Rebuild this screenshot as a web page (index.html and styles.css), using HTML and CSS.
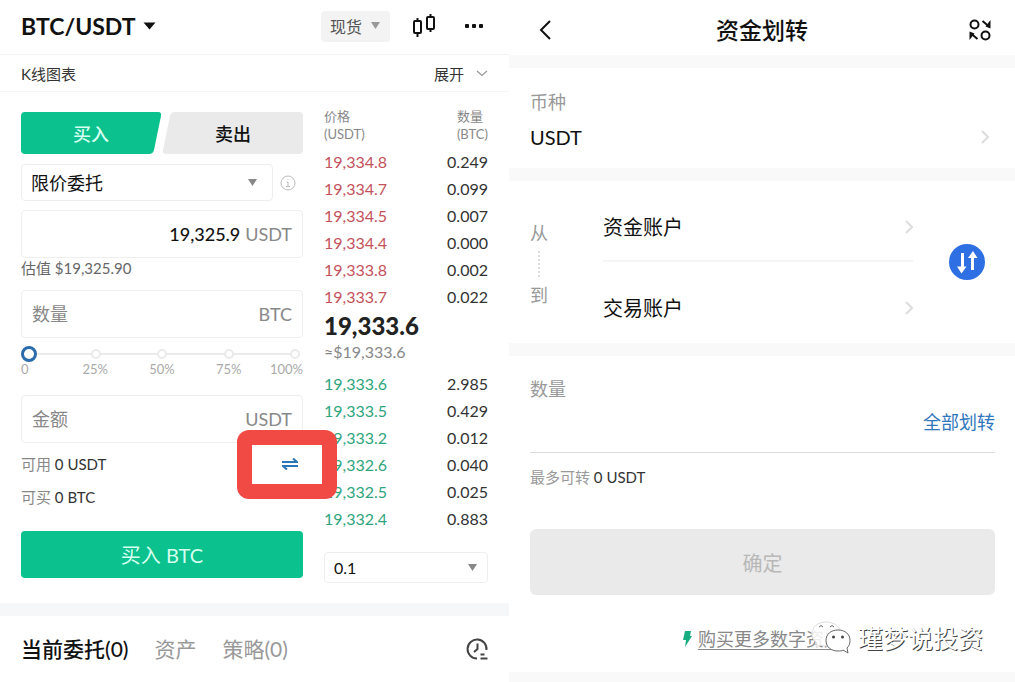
FILE: index.html
```html
<!DOCTYPE html>
<html lang="zh-CN">
<head>
  <meta charset="UTF-8">
  <meta name="viewport" content="width=device-width, initial-scale=1">
  <title>BTC/USDT</title>
  <link rel="stylesheet" href="styles.css">
</head>
<body>
  <div class="screens">

    <!-- Spot trading -->
    <main class="trade">
      <header class="trade-header">
        <button class="pair">BTC/USDT <svg width="13" height="8" viewBox="0 0 12 8"><path d="M0 0.500h12L6 7.500z" fill="#111"/></svg></button>
        <div class="header-tools">
          <div class="select-wrap market">
            <select aria-label="市场"><option>现货</option></select>
            <svg class="arrow" width="9" height="7" viewBox="0 0 9 7"><path d="M0 0h9L4.500 7z" fill="#999"/></svg>
          </div>
          <button class="icon-btn" aria-label="K线">
            <svg width="24" height="26" viewBox="0 0 24 26" fill="none" stroke="#111" stroke-width="2">
              <rect x="2" y="8" width="7" height="12" rx="1"/><path d="M5.500 5v3M5.500 20v4"/>
              <rect x="15" y="4" width="7" height="12" rx="1"/><path d="M18.500 1v3M18.500 16v3"/>
            </svg>
          </button>
          <button class="icon-btn" aria-label="更多">
            <svg width="20" height="4" viewBox="0 0 20 4" fill="#111"><rect x="1" width="4" height="4" rx="1"/><rect x="8" width="4" height="4" rx="1"/><rect x="15" width="4" height="4" rx="1"/></svg>
          </button>
        </div>
      </header>

      <div class="chart-row">
        <span>K线图表</span>
        <button class="expand">展开 <svg width="12" height="7" viewBox="0 0 12 7"><path d="M1 1l5 4.500L11 1" fill="none" stroke="#999" stroke-width="1.300"/></svg></button>
      </div>

      <div class="trade-body">
        <form class="order">
          <div class="sides">
            <button type="button" class="side buy">
              <svg class="side-bg" viewBox="0 0 140 42" preserveAspectRatio="none"><path d="M4 0H137q4 0 3 4L133 38q-1 4-5 4H4q-4 0-4-4V4q0-4 4-4z" fill="#0bc18d"/></svg>
              <span>买入</span>
            </button>
            <button type="button" class="side sell">
              <svg class="side-bg" viewBox="0 0 140 42" preserveAspectRatio="none"><path d="M11 0H136q4 0 4 4V38q0 4-4 4H3q-4 0-3-4L7 4q1-4 4-4z" fill="#eaeaea"/></svg>
              <span>卖出</span>
            </button>
          </div>

          <div class="type-row">
            <div class="select-wrap order-type">
              <select aria-label="委托类型"><option>限价委托</option></select>
              <svg class="arrow" width="9" height="7" viewBox="0 0 9 7"><path d="M0 0h9L4.500 7z" fill="#888"/></svg>
            </div>
            <button type="button" class="icon-btn" aria-label="说明">
              <svg width="16" height="16" viewBox="0 0 16 16" fill="none" stroke="#bbb"><circle cx="8" cy="8" r="7"/><path d="M6.500 7H8v4.500M6 11.500h4"/><path d="M7.500 4h1v1h-1z" fill="#bbb" stroke="none"/></svg>
            </button>
          </div>

          <label class="field">
            <input class="price" type="text" value="19,325.9" aria-label="价格">
            <span>USDT</span>
          </label>
          <p class="estimate">估值 $19,325.90</p>

          <label class="field">
            <input type="text" placeholder="数量" aria-label="数量">
            <span>BTC</span>
          </label>

          <div class="slider">
            <div class="ticks"><i></i><i></i><i></i><i></i><i></i></div>
            <input type="range" min="0" max="100" value="0" aria-label="比例">
          </div>
          <div class="percents">
            <span>0</span><span>25%</span><span>50%</span><span>75%</span><span>100%</span>
          </div>

          <label class="field">
            <input type="text" placeholder="金额" aria-label="金额">
            <span>USDT</span>
          </label>

          <div class="balance">
            <span>可用 <b>0 USDT</b></span>
            <button type="button" class="icon-btn swap" aria-label="划转">
              <svg width="16" height="12" viewBox="0 0 16 12" fill="none" stroke="#2a76b8" stroke-width="2"><path d="M0 4h15L11 0.500M16 8H1l4 3.500"/></svg>
            </button>
            <div class="highlight"></div>
          </div>
          <div class="balance"><span>可买 <b>0 BTC</b></span></div>

          <button type="button" class="submit">买入 BTC</button>
        </form>

        <section class="book">
          <table>
            <thead>
              <tr><th>价格<br>(USDT)</th><th><span>数量<br>(BTC)</span></th></tr>
            </thead>
            <tbody class="asks">
              <tr><td>19,334.8</td><td>0.249</td></tr>
              <tr><td>19,334.7</td><td>0.099</td></tr>
              <tr><td>19,334.5</td><td>0.007</td></tr>
              <tr><td>19,334.4</td><td>0.000</td></tr>
              <tr><td>19,333.8</td><td>0.002</td></tr>
              <tr><td>19,333.7</td><td>0.022</td></tr>
            </tbody>
            <tbody>
              <tr><td class="last" colspan="2"><strong>19,333.6</strong><small>≈$19,333.6</small></td></tr>
            </tbody>
            <tbody class="bids">
              <tr><td>19,333.6</td><td>2.985</td></tr>
              <tr><td>19,333.5</td><td>0.429</td></tr>
              <tr><td>19,333.2</td><td>0.012</td></tr>
              <tr><td>19,332.6</td><td>0.040</td></tr>
              <tr><td>19,332.5</td><td>0.025</td></tr>
              <tr><td>19,332.4</td><td>0.883</td></tr>
            </tbody>
          </table>
          <div class="select-wrap depth">
            <select aria-label="深度"><option>0.1</option></select>
            <svg class="arrow" width="9" height="7" viewBox="0 0 9 7"><path d="M0 0h9L4.500 7z" fill="#888"/></svg>
          </div>
        </section>
      </div>

      <nav class="orders">
        <button class="active">当前委托(0)</button>
        <button>资产</button>
        <button>策略(0)</button>
        <button class="history" aria-label="历史">
          <svg width="22" height="22" viewBox="0 0 22 22" fill="none" stroke="#444" stroke-width="2"><path d="M11 20.500A9.500 9.500 0 1 1 20.500 12"/><path d="M11.500 5.500v5.500l-3.500 3M14.500 16.500h4M14.500 20.500h7"/></svg>
        </button>
      </nav>
    </main>

    <!-- Fund transfer -->
    <main class="transfer">
      <header class="transfer-header">
        <button class="icon-btn back" aria-label="返回">
          <svg width="12" height="20" viewBox="0 0 12 20" fill="none" stroke="#111" stroke-width="2"><path d="M11 1L2 10l9 9"/></svg>
        </button>
        <h1>资金划转</h1>
        <button class="icon-btn" aria-label="划转记录">
          <svg width="22" height="22" viewBox="0 0 22 22" fill="none" stroke="#111" stroke-width="2"><circle cx="5.500" cy="5.500" r="4"/><circle cx="16.500" cy="16.500" r="4"/><path d="M13.500 2l6.500 5.500M8.500 20L2 14.500"/><path d="M21.500 1v8.500l-5-2zM0.500 21v-8.500l5 2z" fill="#111" stroke="none"/></svg>
        </button>
      </header>

      <section class="coin">
        <span class="caption">币种</span>
        <button class="row-btn">USDT
          <svg width="8" height="14" viewBox="0 0 8 14" fill="none" stroke="#ddd" stroke-width="2"><path d="M1 1l6 6-6 6"/></svg>
        </button>
      </section>

      <section class="accounts">
        <div class="direction"><span>从</span><i></i><span>到</span></div>
        <div class="account-list">
          <button class="row-btn">资金账户
            <svg width="8" height="14" viewBox="0 0 8 14" fill="none" stroke="#ddd" stroke-width="2"><path d="M1 1l6 6-6 6"/></svg>
          </button>
          <button class="row-btn">交易账户
            <svg width="8" height="14" viewBox="0 0 8 14" fill="none" stroke="#ddd" stroke-width="2"><path d="M1 1l6 6-6 6"/></svg>
          </button>
        </div>
        <button class="icon-btn" aria-label="互换">
          <svg width="36" height="36" viewBox="0 0 36 36"><circle cx="18" cy="18" r="18" fill="#2f6fe4"/><path d="M13.500 9v15M23.500 26V12" stroke="#fff" stroke-width="3" fill="none"/><path d="M8 22.500h9.500L12.500 29.500zM19 14h9.500L24 7z" fill="#fff"/></svg>
        </button>
      </section>

      <section class="amount">
        <label class="caption" for="amount">数量</label>
        <div class="amount-row">
          <input id="amount" type="text">
          <a href="#">全部划转</a>
        </div>
        <p class="max">最多可转 <b>0 USDT</b></p>
        <button class="confirm" disabled>确定</button>
        <div class="buy-more">
          <svg width="9" height="16" viewBox="0 0 9 16"><path d="M2 0h6L7 5h2L2 16l1-7H0z" fill="#16ad80"/></svg>
          <a href="#">购买更多数字资产</a>
        </div>
        <div class="watermark">
          <svg width="40" height="34" viewBox="0 0 40 34" fill="#fff" stroke="#666">
            <path d="M15 1C7 1 1 6 1 13c0 4 2 7 5 9l-1 5 5-3c2 1 4 1 6 1 8 0 14-5 14-12S23 1 15 1z" fill-opacity="0.850" stroke="#ddd"/>
            <path d="M8 6q2-3 4 0M19 6q2-3 4 0" fill="none"/>
            <path d="M27 9c-7 0-12 4-12 10.500S20 30 27 30c2 0 4 0 5-1l5 3-1-5c2-2 3-4 3-7.500C39 13 34 9 27 9z"/>
            <circle cx="22.500" cy="16" r="1.500" fill="#444" stroke="none"/><circle cx="31.500" cy="16" r="1.500" fill="#444" stroke="none"/>
          </svg>
          <span>瑾梦说投资</span>
        </div>
      </section>
    </main>

  </div>
</body>
</html>
```

FILE: styles.css
```css
* {
  box-sizing: border-box;
}
body {
  margin: 0;
  font-family: Lato, "Noto Sans CJK SC", sans-serif;
  font-size: 16px;
  color: #111;
  background: #fff;
}
button,
input,
select {
  font: inherit;
  color: inherit;
  background: none;
  border: none;
  padding: 0;
  margin: 0;
  outline: none;
}
button {
  cursor: pointer;
}
svg {
  display: block;
  flex: none;
}
p,
h1 {
  margin: 0;
}
b {
  font-weight: 400;
  color: #333;
}
.screens {
  display: grid;
  grid-template-columns: 509fr 506fr;
  min-height: 100vh;
}
.icon-btn {
  display: flex;
}

/* dropdowns */
.select-wrap {
  position: relative;
  border: 1px solid #eee;
  border-radius: 4px;
}
.select-wrap select {
  display: block;
  width: 100%;
  height: 100%;
  padding-left: 9px;
  appearance: none;
}
.select-wrap .arrow {
  position: absolute;
  right: 10px;
  top: 50%;
  margin-top: -4px;
  pointer-events: none;
}

/* trading screen */
.trade-header {
  display: flex;
  align-items: center;
  justify-content: space-between;
  height: 55px;
  padding: 0 25px 2px 21px;
  border-bottom: 1px solid #f2f2f2;
}
.pair {
  display: flex;
  align-items: center;
  gap: 7px;
  font-size: 23px;
  font-weight: 700;
}
.header-tools {
  display: flex;
  align-items: center;
  gap: 22px;
}
.header-tools .icon-btn + .icon-btn {
  margin-left: 6px;
}
.market {
  width: 69px;
  height: 31px;
  background: #f3f3f3;
  border: none;
  color: #555;
}
.chart-row {
  display: flex;
  align-items: center;
  justify-content: space-between;
  height: 37px;
  padding: 0 21px;
  font-size: 15px;
  color: #333;
  border-bottom: 1px solid #f5f5f5;
}
.expand {
  display: flex;
  align-items: center;
  gap: 12px;
}
.trade-body {
  display: grid;
  grid-template-columns: minmax(0, 282fr) minmax(0, 164fr);
  gap: 21px;
  padding: 15px 21px 20px;
}
.order {
  padding-top: 5px;
}
.sides {
  display: grid;
  grid-template-columns: 1fr 1fr;
  gap: 2px;
}
.side {
  position: relative;
  height: 42px;
  font-size: 18px;
  font-weight: 500;
}
.side span {
  position: relative;
}
.side-bg {
  position: absolute;
  left: 0;
  top: 0;
  width: 100%;
  height: 100%;
}
.buy {
  color: #d5fff0;
}
.type-row {
  display: flex;
  align-items: center;
  gap: 7px;
  margin: 10px 7px 9px 0;
}
.order-type {
  flex: 1;
  height: 37px;
  font-size: 18px;
}
.order-type .arrow {
  right: 15px;
}
.field {
  display: flex;
  align-items: center;
  height: 48px;
  padding: 0 10px;
  border: 1px solid #eee;
  border-radius: 4px;
  font-size: 18px;
  color: #888;
}
.field input {
  flex: 1;
  min-width: 0;
}
.field input::placeholder {
  color: #888;
}
.field .price {
  text-align: right;
  font-weight: 500;
  color: #111;
  margin-right: 5px;
}
.estimate {
  font-size: 15px;
  line-height: 20px;
  color: #666;
  margin-bottom: 12px;
}
.slider {
  position: relative;
  height: 16px;
  margin-top: 8px;
}
.ticks {
  display: flex;
  align-items: center;
  justify-content: space-between;
  height: 16px;
  padding: 0 3px;
  background: linear-gradient(#ebebeb, #ebebeb) center / calc(100% - 16px) 2px no-repeat;
}
.ticks i {
  width: 10px;
  height: 10px;
  border: 2px solid #eaeaea;
  border-radius: 50%;
  background: #fff;
}
.slider input {
  position: absolute;
  left: 0;
  top: 0;
  width: 100%;
  height: 16px;
  appearance: none;
}
.slider input::-webkit-slider-thumb {
  appearance: none;
  width: 16px;
  height: 16px;
  border: 3px solid #2a6cac;
  border-radius: 50%;
  background: #fff;
}
.percents {
  display: grid;
  grid-template-columns: 41fr 67fr 67fr 67fr 41fr;
  font-size: 13px;
  line-height: 14px;
  color: #aaa;
  text-align: center;
  margin-bottom: 19px;
}
.percents span:first-child {
  text-align: left;
}
.percents span:last-child {
  justify-self: end;
}
.balance {
  position: relative;
  display: flex;
  align-items: center;
  justify-content: space-between;
  height: 33px;
  font-size: 15px;
  color: #888;
}
.field + .balance {
  margin-top: 4px;
}
.swap {
  margin-right: 5px;
}
.highlight {
  position: absolute;
  right: -34px;
  top: 50%;
  width: 100px;
  height: 69px;
  margin-top: -34px;
  border: 15px solid #f14a45;
  border-radius: 12px;
  pointer-events: none;
}
.submit {
  display: block;
  width: 100%;
  height: 47px;
  margin-top: 18px;
  border-radius: 4px;
  background: #0bc18d;
  color: #d5fff0;
  font-size: 20px;
}
.book table {
  width: 100%;
  border-collapse: collapse;
}
.book th {
  height: 41px;
  padding: 0;
  vertical-align: top;
  text-align: left;
  font-size: 13px;
  font-weight: 400;
  line-height: 18px;
  color: #888;
}
.book th + th {
  text-align: right;
}
.book th span {
  display: inline-block;
  text-align: left;
}
.book td {
  height: 27px;
  padding: 0;
  line-height: 20px;
}
.book td + td {
  text-align: right;
  color: #333;
}
.asks td {
  color: #c4525c;
}
.bids td {
  color: #2fa57e;
}
.book .last {
  padding-bottom: 8px;
}
.last strong {
  display: block;
  font-size: 24px;
  line-height: 32px;
  font-weight: 900;
  color: #222;
}
.last small {
  display: block;
  font-size: 16px;
  color: #888;
}
.depth {
  height: 31px;
  margin-top: 20px;
}
.orders {
  display: flex;
  align-items: center;
  gap: 26px;
  padding: 18px 21px;
  border-top: 13px solid #f5f7f9;
  font-size: 21px;
  line-height: 30px;
  color: #999;
}
.orders .active {
  color: #111;
  font-weight: 500;
}
.history {
  margin-left: auto;
}

/* transfer screen */
.transfer {
  display: flex;
  flex-direction: column;
}
.transfer-header {
  display: flex;
  align-items: center;
  justify-content: space-between;
  height: 55px;
  padding: 4px 24px 0 30px;
}
.back {
  width: 16px;
}
.transfer-header h1 {
  font-size: 23px;
  line-height: 32px;
  font-weight: 500;
}
.caption {
  display: block;
  font-size: 18px;
  line-height: 24px;
  color: #999;
}
.row-btn {
  display: flex;
  align-items: center;
  justify-content: space-between;
  width: 100%;
  font-size: 20px;
}
.coin,
.accounts,
.amount {
  border-top: 13px solid #f9f9f9;
  padding: 0 20px 0 21px;
}
.coin {
  height: 113px;
  padding-top: 22px;
  padding-right: 26px;
}
.coin .row-btn {
  height: 46px;
}
.accounts {
  display: flex;
  align-items: center;
  height: 175px;
  padding-right: 30px;
}
.direction {
  display: flex;
  flex-direction: column;
  align-items: center;
  gap: 6px;
  width: 18px;
  margin: 4px 55px 0 0;
  font-size: 18px;
  line-height: 24px;
  color: #999;
}
.direction i {
  height: 26px;
  border-left: 2px dotted #ddd;
}
.account-list {
  flex: 1;
  margin-right: 36px;
}
.account-list .row-btn {
  height: 81px;
  padding-top: 10px;
}
.account-list .row-btn:first-child {
  padding-top: 12px;
  border-bottom: 2px solid #f5f5f5;
}
.amount {
  position: relative;
  flex: 1;
  padding-top: 21px;
  border-bottom: 10px solid #f9f9f9;
}
.amount-row {
  display: flex;
  align-items: center;
  height: 52px;
  padding-bottom: 12px;
  border-bottom: 1px solid #ddd;
  font-size: 18px;
}
.amount-row input {
  flex: 1;
  min-width: 0;
}
.amount-row a {
  color: #2f76bd;
  text-decoration: none;
}
.max {
  margin-top: 14px;
  font-size: 15px;
  line-height: 20px;
  color: #999;
}
.confirm {
  display: block;
  width: 100%;
  height: 66px;
  margin-top: 42px;
  border-radius: 6px;
  background: #eaeaea;
  color: #b8b8b8;
  font-size: 20px;
}
.buy-more {
  display: flex;
  align-items: center;
  justify-content: center;
  gap: 6px;
  margin-top: 32px;
  font-size: 18px;
  line-height: 24px;
}
.buy-more a {
  color: #888;
  text-underline-offset: 3px;
}
.watermark {
  position: absolute;
  right: 32px;
  bottom: 16px;
  display: flex;
  align-items: center;
  gap: 7px;
  font-size: 25px;
  line-height: 36px;
  color: #fff;
  text-shadow: 1px 1px 0 #444;
}
```
